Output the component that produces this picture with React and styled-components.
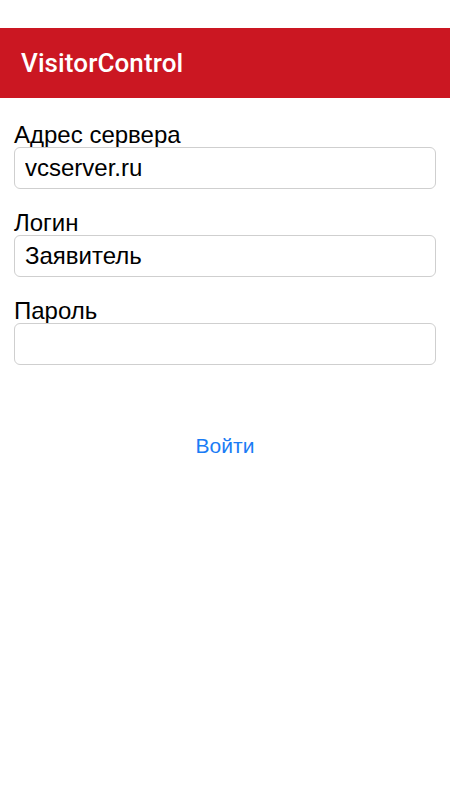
import styled, { createGlobalStyle } from 'styled-components'

const GlobalStyle = createGlobalStyle`
  body {
    margin: 0;
    background: #fff;
    font-family: "Liberation Sans", Arial, sans-serif;
  }
`

export default function App() {
  return (
    <Screen>
      <GlobalStyle />
      <StatusBar />
      <Header>
        <Title>VisitorControl</Title>
      </Header>
      <Form>
        <Field>
          <Label>Адрес сервера</Label>
          <Input defaultValue="vcserver.ru" />
        </Field>
        <Field>
          <Label>Логин</Label>
          <Input defaultValue="Заявитель" />
        </Field>
        <Field>
          <Label>Пароль</Label>
          <Input type="password" />
        </Field>
        <Submit>Войти</Submit>
      </Form>
    </Screen>
  )
}

const Screen = styled.div`
  width: 450px;
  height: 800px;
  display: flex;
  flex-direction: column;
  background: #fff;
`

const StatusBar = styled.div`
  height: 28px;
`

const Header = styled.div`
  height: 70px;
  background: #cb1722;
  display: flex;
  align-items: center;
  padding: 0 21px;
  box-sizing: border-box;
`

const Title = styled.div`
  color: #fff;
  font-size: 26px;
  font-weight: 500;
  font-family: "Roboto", "Liberation Sans", sans-serif;
  letter-spacing: 0.1px;
`

const Form = styled.div`
  display: flex;
  flex-direction: column;
  padding: 25px 14px 0;
  gap: 22px;
`

const Field = styled.div`
  display: flex;
  flex-direction: column;
`

const Label = styled.div`
  font-size: 24px;
  line-height: 24px;
  color: #000;
`

const Input = styled.input`
  height: 42px;
  box-sizing: border-box;
  border: 1px solid #cfcfcf;
  border-radius: 6px;
  padding: 0 10px;
  font-size: 24px;
  font-family: "Liberation Sans", Arial, sans-serif;
  color: #000;
  outline: none;
  background: #fff;
`

const Submit = styled.button`
  align-self: center;
  margin-top: 47px;
  border: none;
  background: none;
  color: #1a7cf5;
  font-size: 21px;
  line-height: 24px;
  font-family: "Liberation Sans", Arial, sans-serif;
  padding: 0;
  cursor: pointer;
`
